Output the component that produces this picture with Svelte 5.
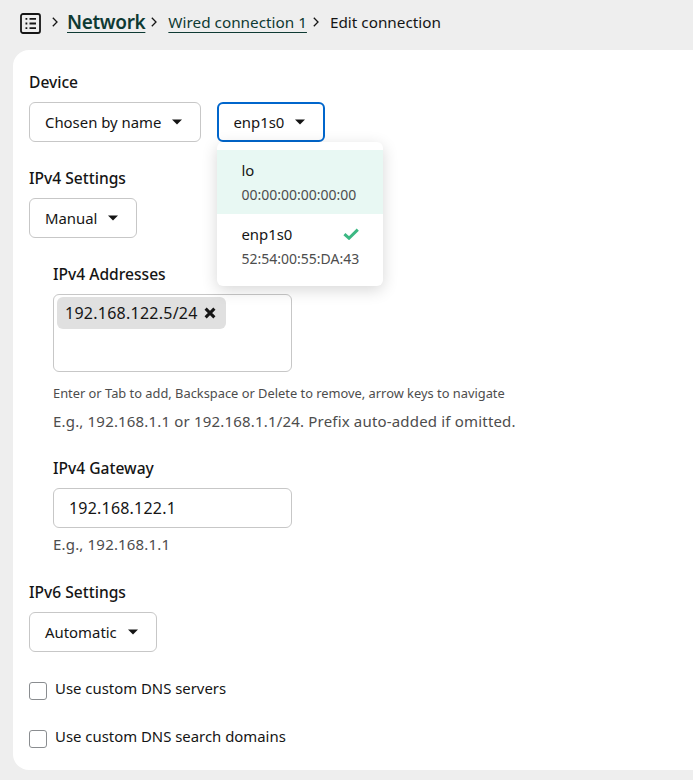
<script lang="ts">
    const devices = [
        { name: 'lo', mac: '00:00:00:00:00:00', hovered: true, selected: false },
        { name: 'enp1s0', mac: '52:54:00:55:DA:43', hovered: false, selected: true },
    ];
</script>

{#snippet caret()}
    <svg class="caret" viewBox="0 0 10 6" aria-hidden="true"><path d="M0 0.4h10L5 5.6z" /></svg>
{/snippet}

{#snippet chevron()}
    <svg class="chevron" viewBox="0 0 6 10" aria-hidden="true"><path d="M0.8 0.8 5 5 0.8 9.2" /></svg>
{/snippet}

<div class="page">
    <nav class="breadcrumb">
        <svg class="nav-icon" viewBox="0 0 21 21" aria-hidden="true">
            <rect x="1" y="1" width="19" height="19" rx="2" />
            <path d="M5.5 5.8h1.8M9.5 5.8h6.5M5.5 10.5h1.8M9.5 10.5h6.5M5.5 15.2h1.8M9.5 15.2h6.5" />
        </svg>
        {@render chevron()}
        <a class="crumb-main" href="#network">Network</a>
        {@render chevron()}
        <a class="crumb-link" href="#wired">Wired connection 1</a>
        {@render chevron()}
        <span class="crumb-current">Edit connection</span>
    </nav>

    <main class="card">
        <section class="device">
            <h3>Device</h3>
            <div class="row">
                <button class="select">Chosen by name {@render caret()}</button>
                <div class="select-wrap">
                    <button class="select open">enp1s0 {@render caret()}</button>
                    <ul class="menu">
                        {#each devices as d}
                            <li class:hovered={d.hovered}>
                                <div class="menu-top">
                                    <span>{d.name}</span>
                                    {#if d.selected}
                                        <svg class="check" viewBox="0 0 16 12" aria-hidden="true">
                                            <path d="M1.4 6.2 6 10.2 14.8 1.6" />
                                        </svg>
                                    {/if}
                                </div>
                                <div class="menu-sub">{d.mac}</div>
                            </li>
                        {/each}
                    </ul>
                </div>
            </div>
        </section>

        <section class="ipv4">
            <h3>IPv4 Settings</h3>
            <button class="select">Manual {@render caret()}</button>

            <div class="nested addresses">
                <h3>IPv4 Addresses</h3>
                <div class="tags">
                    <span class="tag">192.168.122.5/24
                        <svg class="tag-x" viewBox="0 0 12 12" aria-hidden="true"><path d="M1.6 1.6l8.8 8.8M10.4 1.6l-8.8 8.8" /></svg>
                    </span>
                </div>
                <p class="tiny">Enter or Tab to add, Backspace or Delete to remove, arrow keys to navigate</p>
                <p class="help">E.g., 192.168.1.1 or 192.168.1.1/24. Prefix auto-added if omitted.</p>
            </div>

            <div class="nested gateway">
                <h3>IPv4 Gateway</h3>
                <input class="text-input" type="text" value="192.168.122.1" />
                <p class="help">E.g., 192.168.1.1</p>
            </div>
        </section>

        <section class="ipv6">
            <h3>IPv6 Settings</h3>
            <button class="select">Automatic {@render caret()}</button>
        </section>

        <label class="checkbox"><input type="checkbox" /> <span>Use custom DNS servers</span></label>
        <label class="checkbox"><input type="checkbox" /> <span>Use custom DNS search domains</span></label>
    </main>
</div>

<style>
    :global(body) {
        margin: 0;
        background: #eeeeee;
        overflow: hidden;
    }

    .page {
        height: 780px;
        width: 693px;
        overflow: hidden;
        background: #eeeeee;
        color: #151515;
        font-family: 'Noto Sans', 'Open Sans', sans-serif;
        font-size: 14.9px;
    }

    .breadcrumb {
        display: flex;
        align-items: center;
        height: 50px;
        box-sizing: border-box;
        padding: 0 0 6px 20px;
    }

    .nav-icon {
        width: 21px;
        height: 21px;
        margin-top: 2px;
        fill: none;
        stroke: #151515;
        stroke-width: 1.8;
    }

    .chevron {
        width: 6px;
        height: 10px;
        margin: 0 11px 0 6px;
        fill: none;
        stroke: #151515;
        stroke-width: 1.3;
    }

    .nav-icon + .chevron {
        margin: 0 9px 0 11px;
    }

    .crumb-main {
        color: #0e3a33;
        font-size: 19px;
        font-weight: 600;
        letter-spacing: -0.35px;
        line-height: 26px;
        text-decoration: underline;
        text-underline-offset: 3px;
        text-decoration-thickness: 1px;
    }

    .crumb-link {
        color: #0e3a33;
        font-size: 15.3px;
        text-decoration: underline;
        text-underline-offset: 4px;
        text-decoration-thickness: 1px;
    }

    .crumb-current {
        font-size: 15.3px;
    }

    .card {
        margin-left: 13px;
        width: 700px;
        height: 720px;
        box-sizing: border-box;
        padding: 22px 16px 0;
        background: #fff;
        border-radius: 16px;
    }

    h3 {
        margin: 0 0 9px;
        font-size: 15.6px;
        font-weight: 500;
        line-height: 21px;
    }

    .row {
        display: flex;
        gap: 16px;
    }

    .select-wrap {
        position: relative;
    }

    .select {
        display: inline-flex;
        align-items: center;
        gap: 11px;
        height: 40px;
        box-sizing: border-box;
        padding: 0 18px 0 15px;
        background: #fff;
        border: 1px solid #c7c7c7;
        border-radius: 6px;
        color: #151515;
        font: inherit;
    }

    .select.open {
        border: 2px solid #0066cc;
        padding: 0 18px 0 14px;
    }

    .caret {
        width: 10px;
        height: 6px;
        fill: #151515;
    }

    .menu {
        position: absolute;
        top: 40px;
        left: 0;
        z-index: 5;
        width: 166px;
        margin: 0;
        padding: 8px 0;
        list-style: none;
        background: #fff;
        border-radius: 6px;
        box-shadow: 0 4px 16px rgba(0, 0, 0, 0.16);
    }

    .menu li {
        height: 64px;
        box-sizing: border-box;
        padding: 9px 24px 0;
    }

    .menu li.hovered {
        background: #e8f8f3;
    }

    .menu-top {
        display: flex;
        justify-content: space-between;
        align-items: center;
        height: 21px;
    }

    .menu-sub {
        margin-top: 5px;
        font-size: 14px;
        line-height: 20px;
        color: #4d4d4d;
    }

    .check {
        width: 16px;
        height: 12px;
        fill: none;
        stroke: #3cb883;
        stroke-width: 3;
    }

    .ipv4 {
        margin-top: 26px;
    }

    .nested {
        padding-left: 24px;
    }

    .addresses {
        margin-top: 26px;
    }

    .tags {
        box-sizing: border-box;
        width: 239px;
        height: 78px;
        padding: 2px 3px;
        border: 1px solid #c7c7c7;
        border-radius: 6px;
    }

    .tag {
        display: inline-flex;
        align-items: center;
        gap: 6px;
        height: 32px;
        padding: 0 10px 0 8px;
        background: #e0e0e0;
        border-radius: 6px;
        font-size: 16px;
        letter-spacing: 0.25px;
    }

    .tag-x {
        width: 12px;
        height: 12px;
        fill: none;
        stroke: #151515;
        stroke-width: 3;
    }

    .tiny {
        margin: 13px 0 0;
        font-size: 12.85px;
        line-height: 17px;
        color: #4d4d4d;
    }

    .help {
        margin: 9px 0 0;
        font-size: 15px;
        letter-spacing: 0.18px;
        line-height: 20px;
        color: #4d4d4d;
    }

    .gateway {
        margin-top: 27px;
    }

    .gateway .help {
        margin-top: 6px;
    }

    .text-input {
        display: block;
        box-sizing: border-box;
        width: 239px;
        height: 40px;
        padding: 0 15px;
        border: 1px solid #c7c7c7;
        border-radius: 6px;
        color: #151515;
        font: inherit;
        font-size: 16px;
        letter-spacing: 0.2px;
    }

    .ipv6 {
        margin-top: 28px;
    }

    .checkbox {
        display: flex;
        align-items: flex-start;
        gap: 8px;
        margin-top: 27px;
        line-height: 19px;
    }

    .checkbox input {
        appearance: none;
        width: 18px;
        height: 18px;
        margin: 3px 0 0;
        background: #fff;
        border: 1px solid #8a8d90;
        border-radius: 3px;
    }
</style>
